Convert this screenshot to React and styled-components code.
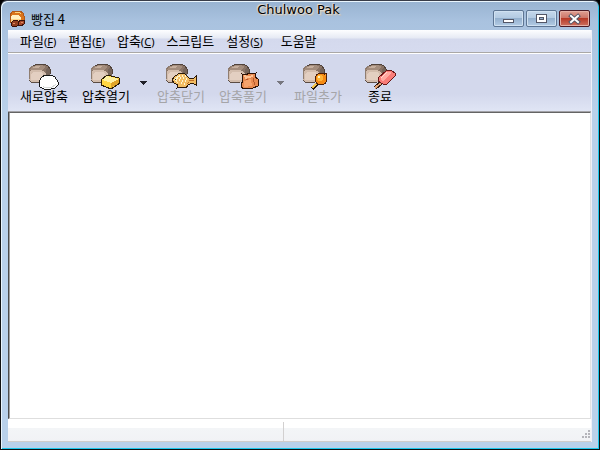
import React from 'react'
import styled, { createGlobalStyle } from 'styled-components'

const GlobalStyle = createGlobalStyle`
  * {
    box-sizing: border-box;
  }
  body {
    margin: 0;
    background: #000;
    font-family: "Noto Sans CJK KR", sans-serif;
    font-size: 13px;
    color: #000;
  }
  button {
    margin: 0;
    padding: 0;
    border: 0;
    background: none;
    font: inherit;
    color: inherit;
  }
`

const Window = styled.div`
  position: relative;
  display: flex;
  flex-direction: column;
  min-height: 100vh;
  padding: 0 6px 7px;
  border: 1px solid #111;
  border-top-color: #383c48;
  border-radius: 7px 7px 0 0;
  background: linear-gradient(180deg, #98b3d1 0, #a9c2df 20px, #b9d1ea 110px, #b9d1ea 100%);
  box-shadow: inset 1px 1px 0 #e9f5fd, inset -1px -1px 0 #1cc8ec;
`

const Caption = styled.div`
  position: absolute;
  top: 1px;
  left: 0;
  right: 3px;
  text-align: center;
  font-family: "DejaVu Sans", sans-serif;
  font-size: 13px;
  line-height: 16px;
  white-space: nowrap;
  pointer-events: none;
  text-shadow: 1px 1px 1px #eadfce, -1px -1px 1px #eadfce, 2px 2px 1px #c3bcb4;
`

const TitleBar = styled.header`
  display: flex;
  align-items: center;
  height: 29px;
  padding: 6px 3px 0 2px;
  gap: 5px;
`

const Title = styled.h1`
  flex: 1;
  margin: 0;
  font-size: 13px;
  font-weight: 400;
  line-height: 20px;
`

const Controls = styled.div`
  display: flex;
  gap: 2px;
`

const Control = styled.button`
  display: flex;
  align-items: center;
  justify-content: center;
  width: 31px;
  height: 17px;
  border: 1px solid ${({ $close }) => ($close ? '#4b1a24' : '#5d7593')};
  border-radius: 2px;
  background: ${({ $close }) =>
    $close
      ? 'linear-gradient(180deg, #dfa093 0, #cd7668 46%, #b73a27 50%, #cd7260 100%)'
      : 'linear-gradient(180deg, #c5d8eb 0, #b3cae2 46%, #94b0ce 50%, #b4cce5 100%)'};
  box-shadow: inset 0 0 0 1px ${({ $close }) => ($close ? '#e5b0a5' : '#d0e1f1')};
`

const Client = styled.div`
  display: flex;
  flex: 1;
  flex-direction: column;
  margin: 0 1px;
  border-right: 1px solid #eef0f8;
`

const MenuBar = styled.nav`
  display: flex;
  height: 23px;
  padding: 0 6px;
  border-bottom: 1px solid #aaa8a6;
  background: linear-gradient(180deg, #fdfeff 0, #e6eaf4 8px, #d4d9ed 9px, #d6dbef 100%);
`

const MenuItem = styled.button`
  padding: 0 6px;
  line-height: 22px;
  white-space: pre;
`

const Key = styled.span`
  font-family: "Noto Sans", sans-serif;
  font-size: 11px;
`

const ToolBar = styled.div`
  display: flex;
  height: 59px;
  padding: 5px;
  border-top: 1px solid #fff;
  border-bottom: 1px solid #a3a3a8;
  background: linear-gradient(180deg, #d3d8ec 0, #d3d8ec 70%, #e0e5f5 100%);
`

const Tool = styled.button`
  display: flex;
  flex-direction: column;
  align-items: center;
  width: 62px;
  padding-top: 3px;
  line-height: 12px;
  white-space: nowrap;
  color: #000;
  &:disabled {
    color: #a5a5a8;
  }
`

const Arrow = styled.button`
  display: flex;
  align-items: center;
  justify-content: center;
  width: 13px;
  color: #202028;
  &:disabled {
    color: #77777f;
  }
`

const FileList = styled.main`
  flex: 1;
  border: 1px solid #646464;
  border-left: 2px groove #a0a0a0;
  border-right-color: #e2e2e2;
  border-bottom-color: #dedede;
  background: #fff;
`

const StatusBar = styled.footer`
  display: flex;
  height: 23px;
  border-bottom: 1px solid #d0cdca;
  background: linear-gradient(180deg, #fff 0, #fff 9px, #f3f5f7 9px, #f1f2f5 100%);
`

const StatusPane = styled.div`
  flex: ${({ $grow }) => $grow};
  margin-top: 3px;
  border-right: ${({ $last }) => ($last ? '0' : '1px solid #d2d0d0')};
`

const Grip = styled.svg`
  align-self: flex-end;
  margin-bottom: 1px;
`

// the loaf behind every toolbar picture
function Bread() {
  return (
    <>
      <path d="M1 9L2 6L5 4L9 2H16L20 4L22 7V16L20 18L15 20H2L1 18Z" fill="#8a7466" />
      <path d="M2 8L4 5L9 3H14L18 5L14 8H2Z" fill="#a48d7d" />
      <path d="M4 6L8 4H12L11 6Z" fill="#c6af9e" />
      <path d="M1 10L3 8H13L17 10L18 12V20H2L1 18Z" fill="#d3bdad" />
      <path d="M3 12L5 10H13L15 12V18H3Z" fill="#e3cfc1" />
      <path d="M18 7L20 5L22 8V15L18 18Z" fill="#75645a" />
      <path d="M1 17V9L2 6L5 4" fill="none" stroke="#8f7d70" />
      <path d="M5 4L9 2H16L20 4L22 7V12" fill="none" stroke="#51433b" />
      <path d="M1 18L3 20H13" fill="none" stroke="#5b4c43" />
    </>
  )
}

const toppings = {
  egg: (
    <>
      <path d="M11 20L13 16L17 13H23L27 15L30 20V23L27 26L23 27H16L12 25Z" fill="#fff" stroke="#181818" />
      <path d="M14 24L17 25H23L28 22L26 25L22 26H17Z" fill="#d5d9d8" />
    </>
  ),
  butter: (
    <>
      <path d="M11 18L17 13L29 16L30 21L21 27L11 23Z" fill="#ffd641" stroke="#2b1d05" />
      <path d="M12 18L17 14L29 17L21 21Z" fill="#fff1a0" />
      <path d="M21 21L29 17V21L21 26Z" fill="#e0a428" />
    </>
  ),
  fish: (
    <>
      <path d="M7 18L10 14L15 11L20 12L24 16L28 17L31 14V23L27 21L23 23L21 26L17 25L12 26L13 23L9 21Z" fill="#f2bd63" stroke="#2b1908" />
      <path d="M9 18L12 14H14L12 18L13 21Z" fill="#fff0bd" />
      <path d="M14 14H15M17 14H18M20 14H21M15 16H16M18 16H19M21 17H22M14 18H15M17 19H18M20 19H21M16 21H17M19 22H20" stroke="#fff5d0" strokeWidth="2" />
      <path d="M24 19L29 18M22 22L24 20" stroke="#c26e26" />
      <path d="M10 17H11" stroke="#222" />
    </>
  ),
  bag: (
    <>
      <path d="M15 12L19 13L22 11L26 12L29 11L28 15L31 17V24L26 26L16 27L14 24L16 17Z" fill="#e88a51" stroke="#2e1205" />
      <path d="M17 13L21 14L26 13L26 15L18 17Z" fill="#ffc394" />
      <path d="M17 19L24 17L25 24L17 25Z" fill="#f6a36c" />
      <path d="M19 17L21 18M26 16L28 23" stroke="#b4592c" />
    </>
  ),
  candy: (
    <>
      <path d="M10 27L17 20" stroke="#26160a" strokeWidth="4" />
      <path d="M10 26L16 20" stroke="#f1c34b" strokeWidth="2" />
      <circle cx="19" cy="17" r="6" fill="#f68a12" stroke="#4d2008" />
      <circle cx="18" cy="16" r="3" fill="#ffb538" />
      <path d="M16 14H18V16H16Z" fill="#fff0bd" />
      <path d="M22 11L25 12L24 15" fill="#f9a133" stroke="#4d2008" />
    </>
  ),
  popsicle: (
    <>
      <path d="M11 26L18 20" stroke="#321b10" strokeWidth="4" />
      <path d="M11 26L18 20" stroke="#e2a374" strokeWidth="2" />
      <path d="M14 16L23 8H27L31 11V14L23 22L19 22L14 19Z" fill="#f87c78" stroke="#6a1717" />
      <path d="M16 17L23 10H26L28 11L19 19Z" fill="#ffa9a1" />
      <path d="M17 16L23 10" stroke="#ffdcd4" />
    </>
  ),
}

function ToolIcon({ name }) {
  return (
    <svg width="32" height="28" viewBox="0 0 32 28" shapeRendering="crispEdges" aria-hidden="true">
      <Bread />
      {toppings[name]}
    </svg>
  )
}

function AppIcon() {
  return (
    <svg width="17" height="17" viewBox="0 0 17 17" shapeRendering="crispEdges" aria-hidden="true">
      <path d="M1 5L3 2L6 1H11L14 3L15 6V12H1Z" fill="#d9741c" stroke="#b0581a" />
      <path d="M4 3L7 2H10L13 4L9 3Z" fill="#ffd27a" />
      <path d="M2 6L4 5H9L12 7V12H2Z" fill="#fff0c4" />
      <path d="M2 9H12V12H2Z" fill="#ffd488" />
      <path d="M2 13L5 10L9 11L10 14L8 16H3Z" fill="#93401f" stroke="#3a1109" />
      <path d="M9 12L12 10L16 11L15 14L12 16L9 15Z" fill="#a9492a" stroke="#3a1109" />
      <path d="M4 13H6M12 12H14" stroke="#df8962" />
    </svg>
  )
}

const menus = [
  { label: '파일', hotkey: 'F' },
  { label: '편집', hotkey: 'E' },
  { label: '압축', hotkey: 'C' },
  { label: '스크립트' },
  { label: '설정', hotkey: 'S', after: '  ' },
  { label: '도움말' },
]

const tools = [
  { label: '새로압축', icon: 'egg' },
  { label: '압축열기', icon: 'butter', arrow: true },
  { label: '압축닫기', icon: 'fish', disabled: true },
  { label: '압축풀기', icon: 'bag', disabled: true, arrow: true },
  { label: '파일추가', icon: 'candy', disabled: true },
  { label: '종료', icon: 'popsicle' },
]

export default function App() {
  return (
    <>
      <GlobalStyle />
      <Window>
        <TitleBar>
          <AppIcon />
          <Title>빵집 4</Title>
          <Controls>
            <Control aria-label="최소화">
              <svg width="13" height="13" viewBox="0 0 13 13" shapeRendering="crispEdges">
                <rect x="1.5" y="7.5" width="10" height="3" fill="#fff" stroke="#535666" />
              </svg>
            </Control>
            <Control aria-label="최대화">
              <svg width="13" height="13" viewBox="0 0 13 13" shapeRendering="crispEdges">
                <path d="M1.5 2.5H11.5V10.5H1.5ZM4.5 5.5V7.5H8.5V5.5Z" fill="#fff" fillRule="evenodd" stroke="#535666" />
              </svg>
            </Control>
            <Control $close aria-label="닫기">
              <svg width="13" height="13" viewBox="0 0 13 13">
                <path d="M3 4L10 10M10 4L3 10" stroke="#535666" strokeWidth="4" strokeLinecap="square" />
                <path d="M3 4L10 10M10 4L3 10" stroke="#fff" strokeWidth="2" strokeLinecap="square" />
              </svg>
            </Control>
          </Controls>
        </TitleBar>
        <Caption>Chulwoo Pak</Caption>
        <Client>
          <MenuBar>
            {menus.map(({ label, hotkey, after }) => (
              <MenuItem key={label}>
                {label}
                {hotkey && <Key>(<u>{hotkey}</u>)</Key>}
                {after}
              </MenuItem>
            ))}
          </MenuBar>
          <ToolBar role="toolbar">
            {tools.map(({ label, icon, disabled, arrow }) => (
              <React.Fragment key={label}>
                <Tool disabled={disabled}>
                  <ToolIcon name={icon} />
                  {label}
                </Tool>
                {arrow && (
                  <Arrow disabled={disabled} aria-label={label}>
                    <svg width="7" height="4" viewBox="0 0 7 4" shapeRendering="crispEdges">
                      <path d="M0 0H7L3.5 4Z" fill="currentColor" />
                    </svg>
                  </Arrow>
                )}
              </React.Fragment>
            ))}
          </ToolBar>
          <FileList />
          <StatusBar>
            <StatusPane $grow={12} />
            <StatusPane $grow={13} $last />
            <Grip width="10" height="10" viewBox="0 0 10 10" shapeRendering="crispEdges">
              <path d="M7 0H9V2H7ZM4 3H6V5H4ZM7 3H9V5H7ZM1 6H3V8H1ZM4 6H6V8H4ZM7 6H9V8H7Z" fill="#b4b4ba" />
            </Grip>
          </StatusBar>
        </Client>
      </Window>
    </>
  )
}
